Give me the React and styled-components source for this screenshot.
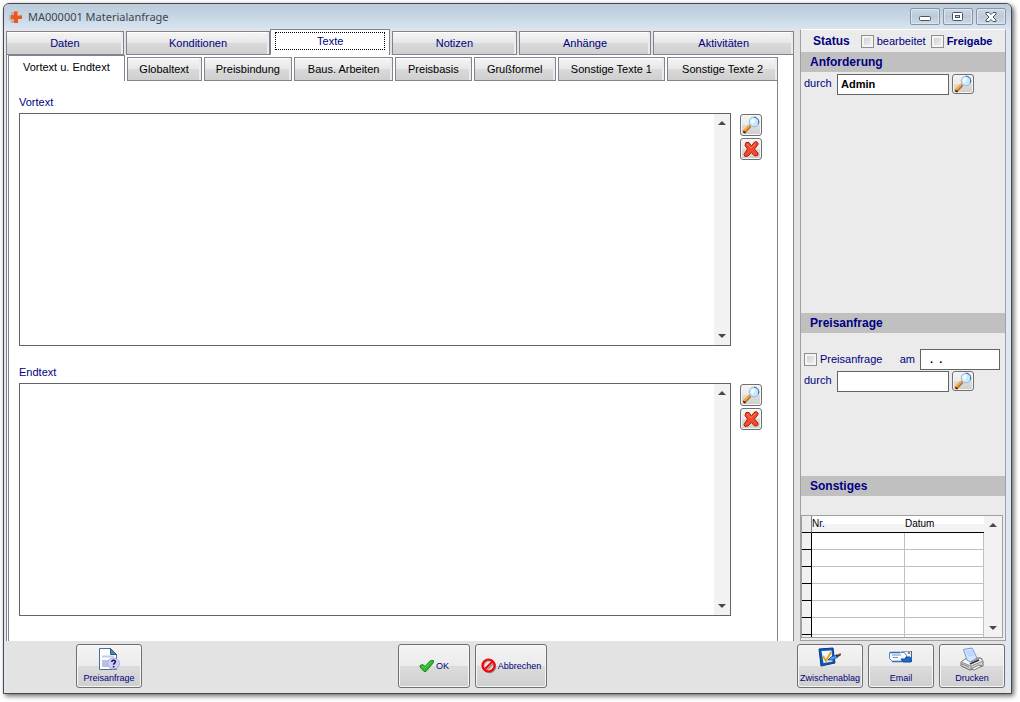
import React from "react";
import styled, { createGlobalStyle, css } from "styled-components";

const mainTabs = [
  { name: "Daten", size: 118 },
  { name: "Konditionen", size: 145 },
  { name: "Texte", size: 120 },
  { name: "Notizen", size: 125 },
  { name: "Anhänge", size: 133 },
  { name: "Aktivitäten", size: 141 },
];

const textTabs = [
  { name: "Vortext u. Endtext", size: 117 },
  { name: "Globaltext", size: 75 },
  { name: "Preisbindung", size: 89 },
  { name: "Baus. Arbeiten", size: 99 },
  { name: "Preisbasis", size: 77 },
  { name: "Grußformel", size: 82 },
  { name: "Sonstige Texte 1", size: 108 },
  { name: "Sonstige Texte 2", size: 111 },
];

const emptyRows = [1, 2, 3, 4, 5, 6, 7];

// Icons

function LogoIcon() {
  return (
    <svg width="16" height="16" viewBox="0 0 16 16" aria-hidden="true">
      <path d="M3 3h4v3h3v5H7v3H3v-3H1V6h2z" fill="#b9b4b4" />
      <path d="M6 2h4v4h4v4h-4v4H6v-4H3V6h3z" fill="#e8581f" />
      <path d="M6.500 2.500h3v4h4" stroke="#f08a5c" fill="none" />
    </svg>
  );
}

function SearchIcon() {
  return (
    <svg width="18" height="18" viewBox="0 0 18 18" aria-hidden="true">
      <path d="M2.500 15.500l5-5" stroke="#b8681a" strokeWidth="3.200" strokeLinecap="round" />
      <path d="M2.500 14.500l5-5" stroke="#ffad2e" strokeWidth="1.800" strokeLinecap="round" />
      <path d="M1.500 15.500l2 1.500" stroke="#2a1a10" strokeWidth="1.500" />
      <path d="M7.500 10.500l1.500-1.500" stroke="#8a96a8" strokeWidth="1.500" />
      <circle cx="12" cy="6" r="4.800" fill="#c4ebfd" stroke="#9fb6e0" />
      <path d="M12 1.200a4.800 4.800 0 0 1 4.200 7" stroke="#3f5da6" fill="none" />
      <path d="M8.500 6a3.500 3.500 0 0 1 4-3.500l.5 2.500-2.500 3.500z" fill="#f2fcff" />
    </svg>
  );
}

function DeleteIcon() {
  return (
    <svg width="18" height="18" viewBox="0 0 18 18" aria-hidden="true">
      <path
        d="M4 2.500h3l2.500 3.500L12 2.500l2-1 2 1.500v1.500L12.500 9l2.500 3 1 1v2l-2 1-2-.5-2.500-3L6 16l-3 .5-1-2L5.500 9 3 5.500z"
        fill="#f4492a"
        stroke="#b01c0c"
        strokeLinejoin="round"
      />
      <path d="M5 4l4 4 4.500-4.500" stroke="#ff8565" fill="none" />
    </svg>
  );
}

function RequestIcon() {
  return (
    <svg width="22" height="24" viewBox="0 0 22 24" aria-hidden="true">
      <path d="M1.500 1.500h11l6 6v15h-17z" fill="#fcfdff" stroke="#4d6f96" />
      <path d="M12.500 1.500v6h6z" fill="#4c88a6" stroke="#32597f" />
      <path d="M4 9.500h12" stroke="#c3cde6" strokeWidth="2" />
      <path d="M4 13h7v7H4z" fill="#b9c1dc" />
      <ellipse cx="15.500" cy="16.500" rx="6" ry="5.500" fill="#cfcffa" stroke="#a9a9e4" />
      <path
        d="M13.800 15c0-2.400 3.600-2.400 3.600-.2 0 1.400-1.800 1.300-1.800 2.900M15.600 19v1.400"
        stroke="#15154a"
        strokeWidth="1.500"
        fill="none"
      />
    </svg>
  );
}

function OkIcon() {
  return (
    <svg width="16" height="14" viewBox="0 0 16 14" aria-hidden="true">
      <path
        d="M1 6.500L4 5.500l2 2L11.500 1.500h3v2L7 12.500H5L1 8z"
        fill="#2cb52a"
        stroke="#179017"
        strokeLinejoin="round"
      />
      <path d="M2.500 7l3 2.500L12.500 2.500" stroke="#5fd656" fill="none" />
    </svg>
  );
}

function CancelIcon() {
  return (
    <svg width="16" height="16" viewBox="0 0 16 16" aria-hidden="true">
      <circle cx="8.500" cy="8.500" r="6" fill="none" stroke="#8a8a8a" strokeWidth="1.500" />
      <path d="M5 13l8-8" stroke="#8a8a8a" strokeWidth="1.500" />
      <circle cx="7.500" cy="7.500" r="6" fill="none" stroke="#fa0000" strokeWidth="2.200" />
      <path d="M3.500 11.500l8-8" stroke="#fa0000" strokeWidth="2" />
    </svg>
  );
}

function ClipboardIcon() {
  return (
    <svg width="24" height="20" viewBox="0 0 24 20" aria-hidden="true">
      <path d="M1 2l14-1 2 15-14 3z" fill="#0e55c0" stroke="#083a86" />
      <path d="M3.500 4l10-.5 1 11-9 1.500z" fill="#f2f7ff" />
      <path d="M5 9l3 5 5-9" stroke="#e3a51c" strokeWidth="2" fill="none" />
      <path d="M10 13l3-3 6-2 1 2-6 3z" fill="#5da3ea" stroke="#1c5fb8" />
      <path d="M18 9l4-1" stroke="#3a2f3f" strokeWidth="2" />
      <path d="M21 7.500h2" stroke="#b5352b" strokeWidth="2" />
    </svg>
  );
}

function EmailIcon() {
  return (
    <svg width="24" height="20" viewBox="0 0 24 20" aria-hidden="true">
      <path d="M12.500 4.500h10v9h-10z" fill="#eef4fb" stroke="#8ca6c4" />
      <path d="M19 5h2v2h-2z" fill="#e8601f" />
      <path d="M22.500 4v11" stroke="#2f68b5" />
      <path d="M.5 5.500h15l2 3v6h-14l-3-3z" fill="#f7fafe" stroke="#5b87bd" />
      <path d="M1 5.500h10M3 14.500h10" stroke="#2d6fb8" strokeWidth="1.500" />
      <path d="M3 8h9M4 10.500h5" stroke="#7d93ad" />
      <path d="M12 12h4l1-2h4l1 2v3h-8z" fill="#1f6bd0" stroke="#164b9b" />
    </svg>
  );
}

function PrinterIcon() {
  return (
    <svg width="24" height="24" viewBox="0 0 24 24" aria-hidden="true">
      <path d="M1 15l6-4 14 0 2 3v5l-13 4-9-4z" fill="#cfcfcf" stroke="#6e6e6e" />
      <path d="M1 15l10 4 12-5-3-3-9 4-4-4z" fill="#f5f5f5" stroke="#909090" />
      <path d="M3.500 2.500L12 1l5 10-7 4-3-2z" fill="#d3e6ff" stroke="#6b9be0" />
      <path d="M6 5l6-1M7 7l6-1M8 9l6-1" stroke="#a9caf5" />
      <path d="M10 17l9-4" stroke="#303030" strokeWidth="1.500" />
      <path d="M11 19v3M2 17l7 3" stroke="#858585" />
      <path d="M11 22l8-4 3 1-8 4z" fill="#fff" stroke="#777" />
    </svg>
  );
}

function Arrow({ down }) {
  return (
    <svg width="8" height="4" viewBox="0 0 8 4" aria-hidden="true">
      <path d={down ? "M0 0h8L4 4z" : "M0 4h8L4 0z"} fill="#484848" />
    </svg>
  );
}

// Parts used more than once

function ScrollBar({ label }) {
  return (
    <Scroll>
      <ScrollButton type="button" aria-label={`${label} nach oben`}>
        <Arrow />
      </ScrollButton>
      <ScrollButton type="button" aria-label={`${label} nach unten`}>
        <Arrow down />
      </ScrollButton>
    </Scroll>
  );
}

function TextBlock({ id, label }) {
  return (
    <Block>
      <BlockLabel htmlFor={id}>{label}</BlockLabel>
      <BlockRow>
        <TextFrame>
          <TextArea id={id} />
          <ScrollBar label={label} />
        </TextFrame>
        <BlockTools>
          <IconButton type="button" aria-label={`${label} suchen`}>
            <SearchIcon />
          </IconButton>
          <IconButton type="button" aria-label={`${label} löschen`}>
            <DeleteIcon />
          </IconButton>
        </BlockTools>
      </BlockRow>
    </Block>
  );
}

function App() {
  const [mainTab, setMainTab] = React.useState("Texte");
  const [textTab, setTextTab] = React.useState("Vortext u. Endtext");
  const [requester, setRequester] = React.useState("Admin");
  const [date, setDate] = React.useState("  .  .");

  return (
    <Page>
      <GlobalStyle />
      <Window>
        <TitleBar>
          <LogoIcon />
          <Title>MA000001 Materialanfrage</Title>
          <WindowButton type="button" aria-label="Minimieren">
            <svg width="12" height="10" viewBox="0 0 12 10">
              <rect x="0.5" y="4.500" width="11" height="4" rx="1" fill="#fff" stroke="#4b545e" />
            </svg>
          </WindowButton>
          <WindowButton type="button" aria-label="Maximieren">
            <svg width="12" height="10" viewBox="0 0 12 10">
              <rect x="0.5" y="0.5" width="10" height="8" rx="1" fill="#fff" stroke="#4b545e" />
              <rect x="3.500" y="3.500" width="4" height="2" fill="#c5d3e0" stroke="#4b545e" />
            </svg>
          </WindowButton>
          <WindowButton type="button" aria-label="Schließen">
            <svg width="12" height="10" viewBox="0 0 12 10">
              <path
                d="M1 .5h3l2 2 2-2h3v1.500L8 5l3 3v1.500H8l-2-2-2 2H1V8l3-3-3-3z"
                fill="#fff"
                stroke="#4b545e"
              />
            </svg>
          </WindowButton>
        </TitleBar>

        <Content>
          <Main>
            <TabRow role="tablist">
              {mainTabs.map((tab) => (
                <Tab
                  key={tab.name}
                  type="button"
                  role="tab"
                  $size={tab.size}
                  aria-selected={mainTab === tab.name}
                  onClick={() => setMainTab(tab.name)}
                >
                  {mainTab === tab.name ? <Focus>{tab.name}</Focus> : tab.name}
                </Tab>
              ))}
            </TabRow>
            <OuterPanel>
              <InnerPages>
                <TabRow role="tablist">
                  {textTabs.map((tab) => (
                    <Tab
                      key={tab.name}
                      type="button"
                      role="tab"
                      $size={tab.size}
                      $dark
                      aria-selected={textTab === tab.name}
                      onClick={() => setTextTab(tab.name)}
                    >
                      {tab.name}
                    </Tab>
                  ))}
                </TabRow>
                <InnerPanel>
                  <TextBlock id="vortext" label="Vortext" />
                  <TextBlock id="endtext" label="Endtext" />
                </InnerPanel>
              </InnerPages>
            </OuterPanel>
          </Main>

          <Sidebar>
            <StatusRow>
              <StatusTitle>Status</StatusTitle>
              <CheckLabel>
                <Checkbox type="checkbox" />
                bearbeitet
              </CheckLabel>
              <CheckLabel $bold>
                <Checkbox type="checkbox" />
                Freigabe
              </CheckLabel>
            </StatusRow>

            <SectionTitle>Anforderung</SectionTitle>
            <Section $size={241}>
              <FieldRow>
                <FieldLabel htmlFor="anforderung">durch</FieldLabel>
                <Field
                  id="anforderung"
                  value={requester}
                  onChange={(e) => setRequester(e.target.value)}
                />
                <IconButton type="button" $low aria-label="Anforderung suchen">
                  <SearchIcon />
                </IconButton>
              </FieldRow>
            </Section>

            <SectionTitle>Preisanfrage</SectionTitle>
            <Section $size={143} $spaced>
              <FieldRow>
                <CheckLabel>
                  <Checkbox type="checkbox" />
                  Preisanfrage
                </CheckLabel>
                <DateLabel htmlFor="datum">am</DateLabel>
                <DateField
                  id="datum"
                  value={date}
                  onChange={(e) => setDate(e.target.value)}
                />
              </FieldRow>
              <FieldRow>
                <FieldLabel htmlFor="preisanfrage">durch</FieldLabel>
                <Field id="preisanfrage" />
                <IconButton type="button" $low aria-label="Preisanfrage suchen">
                  <SearchIcon />
                </IconButton>
              </FieldRow>
            </Section>

            <SectionTitle>Sonstiges</SectionTitle>
            <TableFrame>
              <TableClip>
                <Table>
                  <thead>
                    <tr>
                      <Corner />
                      <Head>Nr.</Head>
                      <Head>Datum</Head>
                    </tr>
                  </thead>
                  <tbody>
                    {emptyRows.map((row) => (
                      <tr key={row}>
                        <Selector />
                        <Cell />
                        <Cell />
                      </tr>
                    ))}
                  </tbody>
                </Table>
              </TableClip>
              <ScrollBar label="Sonstiges" />
            </TableFrame>
          </Sidebar>
        </Content>

        <Footer>
          <FooterButton type="button">
            <RequestIcon />
            Preisanfrage
          </FooterButton>
          <Decision>
            <DecisionButton type="button">
              <OkIcon />
              OK
            </DecisionButton>
            <DecisionButton type="button">
              <CancelIcon />
              Abbrechen
            </DecisionButton>
          </Decision>
          <Actions>
            <FooterButton type="button">
              <ClipboardIcon />
              Zwischenablag
            </FooterButton>
            <FooterButton type="button">
              <EmailIcon />
              Email
            </FooterButton>
            <FooterButton type="button">
              <PrinterIcon />
              Drucken
            </FooterButton>
          </Actions>
        </Footer>
      </Window>
    </Page>
  );
}

export default App;

const GlobalStyle = createGlobalStyle`
  * {
    box-sizing: border-box;
  }
  body {
    margin: 0;
    background: #fff;
    color: #000080;
    font: 11px/14px "Liberation Sans", Arial, sans-serif;
  }
  button, input, textarea {
    font: inherit;
    color: inherit;
  }
  svg {
    display: block;
    flex: none;
  }
`;

const Page = styled.div`
  display: flex;
  min-height: 100vh;
  padding: 3px 8px 8px 3px;
`;

const Window = styled.div`
  flex: 1;
  min-width: 0;
  display: flex;
  flex-direction: column;
  border: 1px solid #45484c;
  border-radius: 6px 6px 0 0;
  background: #dfe7f1;
  box-shadow: 2px 2px 5px rgba(0, 0, 0, 0.6);
`;

const TitleBar = styled.header`
  display: flex;
  align-items: center;
  gap: 3px;
  height: 25px;
  padding: 0 5px 0 4px;
  border-radius: 5px 5px 0 0;
  background: linear-gradient(#bccbd9, #c6d5e3 45%, #d8e4f0);
`;

const Title = styled.h1`
  flex: 1;
  margin: 0 0 0 1px;
  color: #3b4650;
  font: 11px/16px "Noto Sans", "Open Sans", sans-serif;
`;

const WindowButton = styled.button`
  display: flex;
  align-items: center;
  justify-content: center;
  width: 30px;
  height: 17px;
  padding: 0;
  border: 1px solid #8795a5;
  border-radius: 2px;
  background: linear-gradient(#cbd8e5, #bccbda 50%, #cddae7);
  box-shadow: inset 0 0 0 1px #dce6f0;
`;

const Content = styled.div`
  flex: 1;
  display: flex;
  gap: 6px;
  margin: 0 5px 0 2px;
  background: #e3e3e3;
`;

const Main = styled.main`
  flex: 1;
  min-width: 0;
  display: flex;
  flex-direction: column;
`;

const TabRow = styled.div`
  display: flex;
  align-items: flex-end;
  height: 26px;
`;

const Tab = styled.button`
  flex: ${(props) => props.$size} 1 ${(props) => props.$size}px;
  min-width: 0;
  height: 24px;
  margin-left: 2px;
  padding: 0;
  border: 1px solid #83838f;
  color: ${(props) => (props.$dark ? "#000" : "#000080")};
  background: linear-gradient(#f5f5f5, #e7e7e7 49%, #dadada 50%, #cfcfcf);
  box-shadow: inset -2px 0 0 #ececec, inset 0 1px 0 #fff;
  white-space: nowrap;

  &:first-child,
  &[aria-selected="true"],
  &[aria-selected="true"] + & {
    margin-left: 0;
  }

  &[aria-selected="true"] {
    height: 26px;
    padding: 0 4px 3px;
    border-bottom: 0;
    background: #fff;
    box-shadow: none;
  }
`;

const Focus = styled.span`
  display: block;
  padding: 1px 0;
  border: 1px dotted #000;
`;

const OuterPanel = styled.div`
  flex: 1;
  display: flex;
  padding: 0 15px 0 1px;
  border: solid #83838f;
  border-width: 0 1px;
  background: #fff;
`;

const InnerPages = styled.div`
  flex: 1;
  min-width: 0;
  display: flex;
  flex-direction: column;
`;

const InnerPanel = styled.div`
  flex: 1;
  display: flex;
  flex-direction: column;
  gap: 19px;
  padding: 14px 15px 25px 10px;
  border: solid #83838f;
  border-width: 0 1px;
`;

const Block = styled.section`
  flex: 1;
  display: flex;
  flex-direction: column;
  gap: 4px;
`;

const BlockLabel = styled.label`
  align-self: flex-start;
`;

const BlockRow = styled.div`
  flex: 1;
  display: flex;
  gap: 9px;
`;

const TextFrame = styled.div`
  flex: 1;
  display: flex;
  min-height: 120px;
  border: 1px solid #646464;
  background: #fff;
`;

const TextArea = styled.textarea`
  flex: 1;
  min-width: 0;
  padding: 3px;
  border: 0;
  outline: 0;
  resize: none;
  overflow: hidden;
  background: transparent;
`;

const BlockTools = styled.div`
  display: flex;
  flex-direction: column;
  gap: 2px;
  padding-top: 1px;
`;

const Scroll = styled.div`
  display: flex;
  flex-direction: column;
  justify-content: space-between;
  width: 16px;
  background: #f2f2f2;
`;

const ScrollButton = styled.button`
  display: flex;
  align-items: center;
  justify-content: center;
  height: 18px;
  padding: 0;
  border: 0;
  background: none;
`;

const buttonFace = css`
  border: 1px solid #707070;
  border-radius: 3px;
  background: linear-gradient(#f4f4f4, #ebebeb 49%, #dcdcdc 50%, #cfcfcf);
  box-shadow: inset 0 0 0 1px #f6f6f6;
`;

const IconButton = styled.button`
  ${buttonFace}
  display: flex;
  align-items: center;
  justify-content: center;
  width: 22px;
  height: ${(props) => (props.$low ? "20px" : "22px")};
  padding: 0;
`;

const Sidebar = styled.aside`
  width: 206px;
  display: flex;
  flex-direction: column;
  border: 1px solid #a0a0a0;
  border-top-color: #fff;
  background: #ebebeb;
`;

const StatusRow = styled.div`
  display: flex;
  align-items: center;
  height: 22px;
  gap: 5px;
  padding-left: 12px;
`;

const StatusTitle = styled.strong`
  margin-right: 6px;
  font-size: 12px;
`;

const CheckLabel = styled.label`
  display: flex;
  align-items: center;
  gap: 3px;
  font-weight: ${(props) => (props.$bold ? "bold" : "normal")};
`;

const Checkbox = styled.input`
  appearance: none;
  width: 13px;
  height: 13px;
  margin: 0;
  border: 1px solid #8e8f8f;
  background: linear-gradient(135deg, #c6cad2, #f5f5f5);
  box-shadow: inset 0 0 0 2px #f4f4f4;

  &:checked {
    background: #000080;
  }
`;

const SectionTitle = styled.h2`
  margin: 0;
  padding: 3px 9px;
  background: #c0c0c0;
  font-size: 12px;
  line-height: 14px;
`;

const Section = styled.div`
  flex: ${(props) => props.$size} 0 ${(props) => props.$size}px;
  padding: ${(props) => (props.$spaced ? "15px 3px 0" : "1px 3px 0")};
`;

const FieldRow = styled.div`
  display: flex;
  align-items: center;
  gap: 3px;
  height: 22px;
`;

const FieldLabel = styled.label`
  width: 30px;
  padding-bottom: 3px;
`;

const Field = styled.input`
  width: 112px;
  height: 21px;
  padding: 0 3px;
  border: 1px solid #646464;
  background: #fff;
  color: #000;
  font-weight: bold;
`;

const DateLabel = styled.label`
  margin-left: auto;
`;

const DateField = styled(Field)`
  width: 80px;
  margin: 0 2px;
`;

const TableFrame = styled.div`
  flex: 0 0 auto;
  display: flex;
  height: 123px;
  margin: 19px 2px 2px 0;
  border: 1px solid #a0a0a0;
  background: #fff;

  ${Scroll} {
    width: 18px;
  }
`;

const TableClip = styled.div`
  flex: 1;
  overflow: hidden;
`;

const Table = styled.table`
  width: 100%;
  table-layout: fixed;
  border-spacing: 0;
  color: #000;
  font-size: 10px;
  line-height: 14px;
`;

const Corner = styled.td`
  width: 10px;
  height: 17px;
  padding: 0;
  border-right: 1px solid #808080;
  border-bottom: 1px solid #000;
  background: #ececec;
`;

const Head = styled.th`
  padding: 0;
  border-bottom: 1px solid #000;
  background: linear-gradient(#fff 50%, #f1f3f6 50%);
  font-weight: normal;
  text-align: left;

  &:nth-child(2) {
    width: 93px;
  }
`;

const Selector = styled.td`
  height: 17px;
  padding: 0;
  border-right: 1px solid #000;
  border-bottom: 1px solid #000;
  background: #f0f0f0;
`;

const Cell = styled.td`
  padding: 0;
  border-right: 1px solid #c0c0c0;
  border-bottom: 1px solid #c0c0c0;
`;

const Footer = styled.footer`
  display: flex;
  align-items: flex-end;
  justify-content: space-between;
  height: 52px;
  margin: 0 5px 0 2px;
  padding: 0 1px 5px 70px;
  background: #e3e3e3;
`;

const Decision = styled.div`
  display: flex;
  gap: 5px;
  margin-left: 6px;
`;

const Actions = styled.div`
  display: flex;
  gap: 5px;
`;

const FooterButton = styled.button`
  ${buttonFace}
  display: flex;
  flex-direction: column;
  align-items: center;
  justify-content: space-between;
  width: 66px;
  height: 44px;
  padding: 2px 0 3px;
  font-size: 9px;
  line-height: 12px;
  white-space: nowrap;
`;

const DecisionButton = styled(FooterButton)`
  flex-direction: row;
  justify-content: center;
  gap: 1px;
  width: 72px;
`;
